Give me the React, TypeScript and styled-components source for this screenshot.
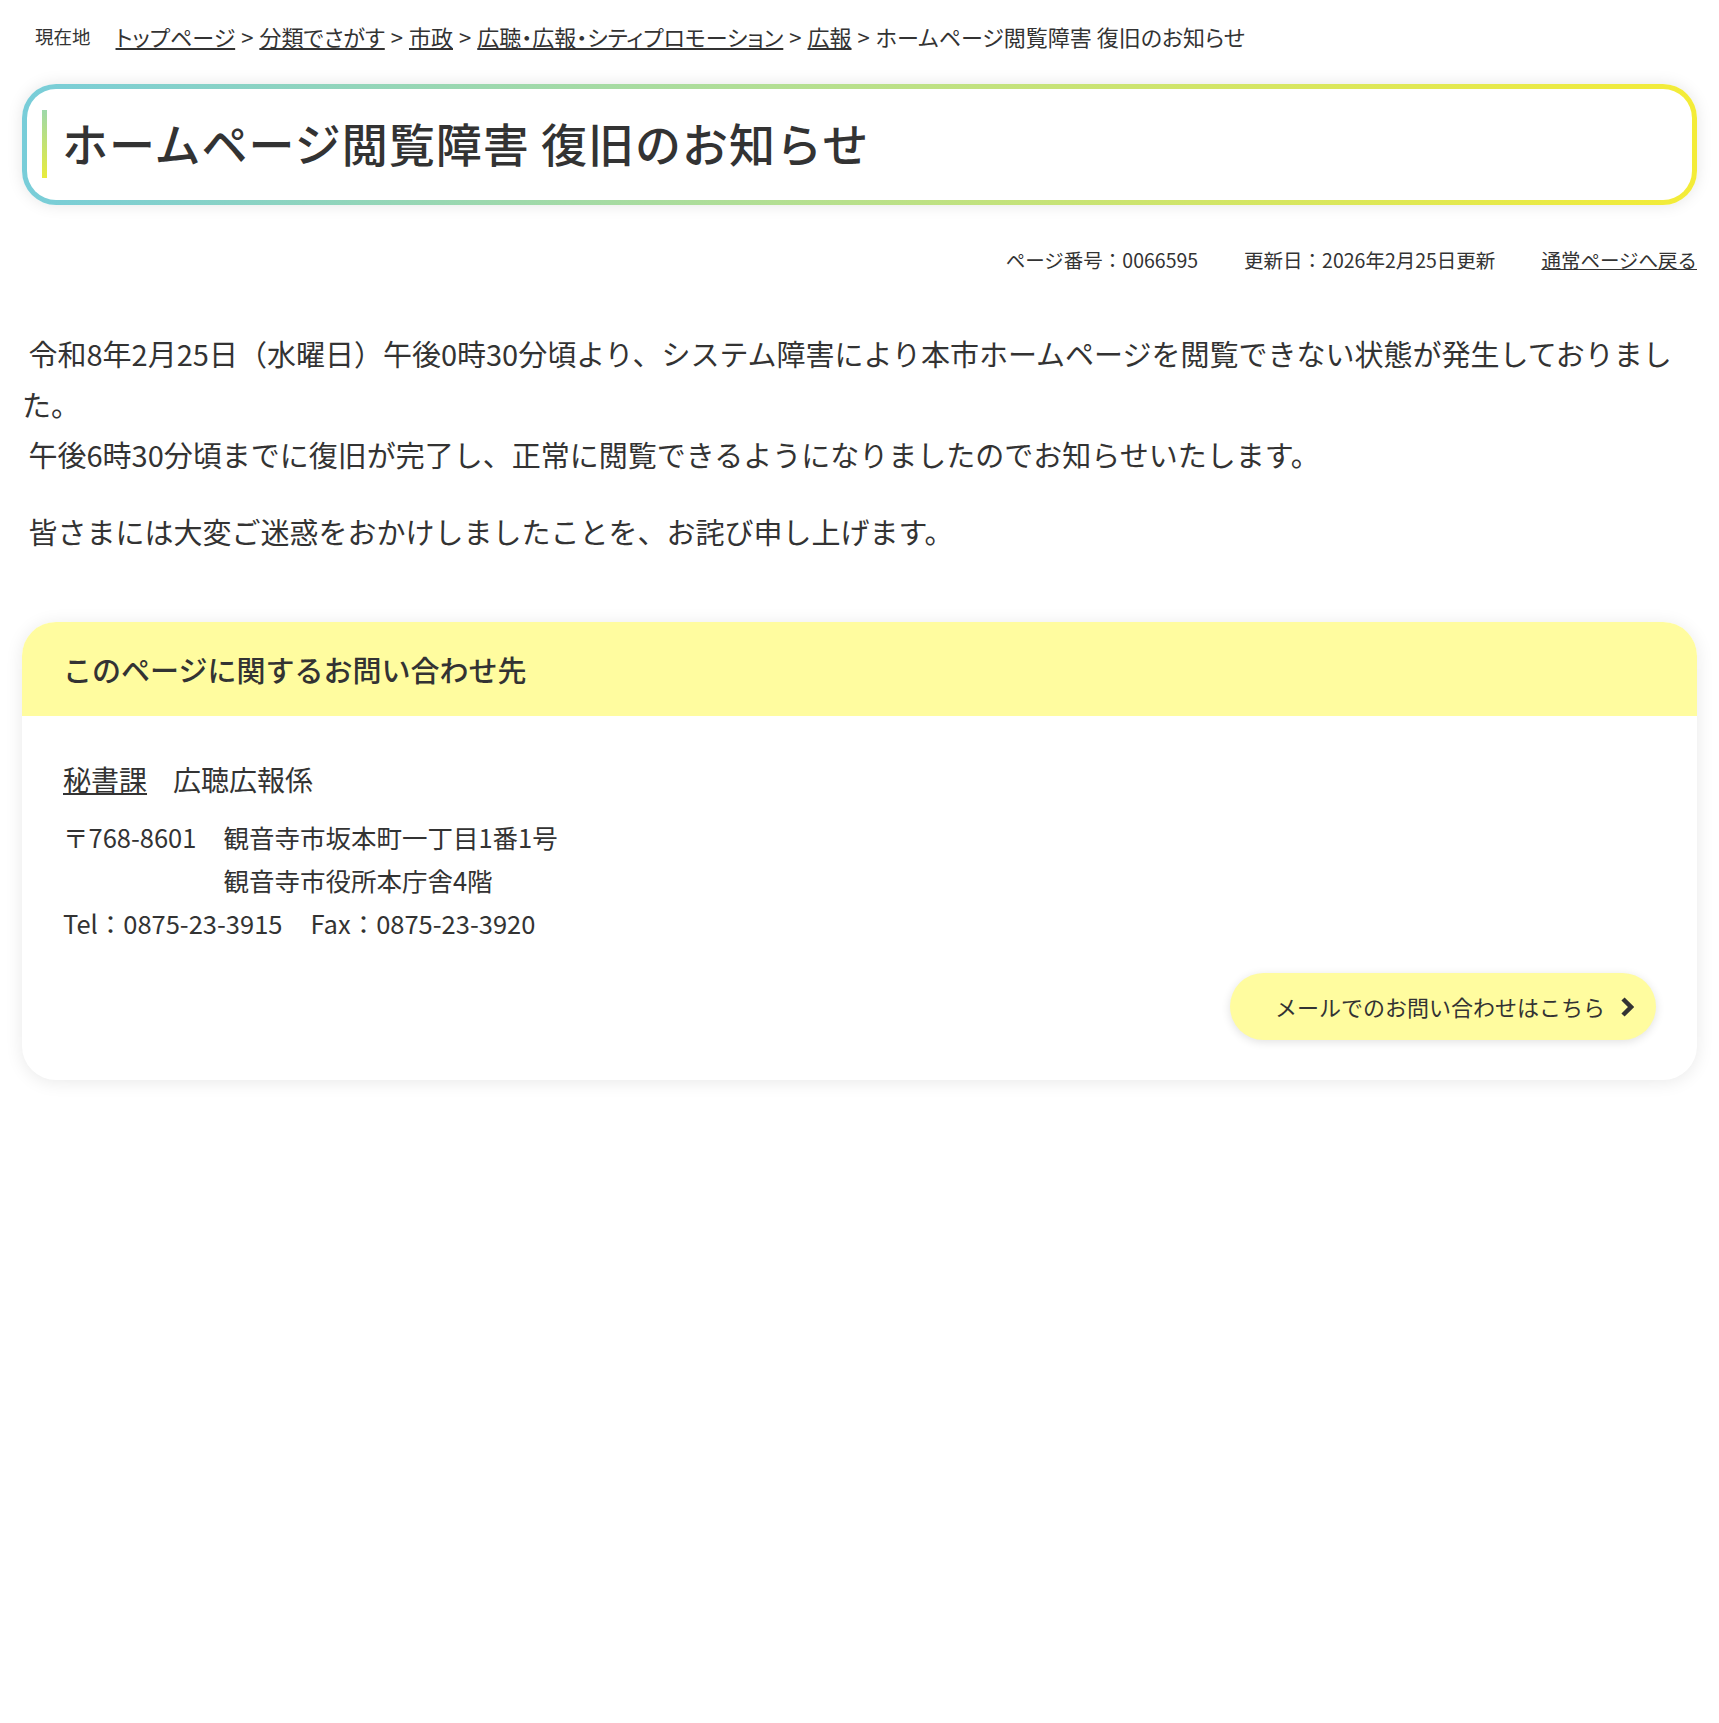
import React from "react";
import styled, { createGlobalStyle } from "styled-components";

const GlobalStyle = createGlobalStyle`
  body {
    margin: 0;
    background: #fff;
    color: #333;
    font-family: "Noto Sans CJK JP", "Liberation Sans", sans-serif;
  }

  a {
    color: #333;
  }
`;

const Page = styled.div`
  padding: 0 22px 80px;
`;

const Breadcrumb = styled.nav`
  display: flex;
  align-items: center;
  padding: 20px 0 0 13px;
  font-size: 22px;
  line-height: 32px;
  white-space: nowrap;
  font-feature-settings: "palt";
`;

const Here = styled.span`
  font-size: 18.5px;
  margin-right: 25px;
`;

const Sep = styled.span`
  margin: 0 6px;
`;

const TitleFrame = styled.div`
  margin-top: 32px;
  padding: 5px;
  border-radius: 34px;
  background: linear-gradient(90deg, #78cdd9 0%, #b3df93 45%, #f4ec37 100%);
  box-shadow: 0 0 16px rgba(0, 0, 0, 0.1);
`;

const TitleInner = styled.div`
  background: #fff;
  border-radius: 29px;
  padding: 21px 15px 22px;
`;

const H1 = styled.h1`
  margin: 0;
  padding-left: 15px;
  border-left: 5px solid;
  border-image: linear-gradient(180deg, #9cd8ac, #eaec3a) 1;
  font-size: 46px;
  line-height: 64px;
  padding-bottom: 4px;
  font-weight: 500;
  letter-spacing: 1px;
  color: #333;
`;

const Meta = styled.div`
  display: flex;
  justify-content: flex-end;
  gap: 46px;
  margin-top: 40px;
  font-size: 19.5px;
  line-height: 30px;
`;

const Body = styled.div`
  margin-top: 53px;
  font-size: 29px;
  line-height: 50.5px;

  p {
    margin: 0 0 26px;
  }
`;

const ContactBox = styled.section`
  margin-top: 66px;
  border-radius: 34px;
  background: #fff;
  box-shadow: 0 2px 18px rgba(0, 0, 0, 0.09);
  overflow: hidden;
`;

const ContactHead = styled.h2`
  margin: 0;
  height: 94px;
  display: flex;
  align-items: center;
  padding: 0 41px;
  background: #fffc9f;
  font-size: 29px;
  font-weight: 500;
  color: #333;
`;

const ContactBody = styled.div`
  padding: 42px 41px 40px;
  font-size: 25.5px;
  line-height: 43px;
`;

const Division = styled.div`
  font-size: 28px;
  line-height: 42px;
  margin-bottom: 15px;

  a {
    margin-right: 26px;
  }
`;

const AddressRow = styled.div`
  display: flex;
  gap: 27px;
`;

const TelRow = styled.div`
  display: flex;
  gap: 28px;
`;

const ButtonRow = styled.div`
  display: flex;
  justify-content: flex-end;
  margin-top: 29px;
`;

const MailButton = styled.a`
  display: inline-flex;
  align-items: center;
  gap: 15px;
  height: 67px;
  padding: 0 22px 0 45px;
  border-radius: 34px;
  background: #fffc9f;
  box-shadow: 0 2px 10px rgba(0, 0, 0, 0.12);
  font-size: 22px;
  color: #333;
  text-decoration: none;
`;

const crumbs = [
  "トップページ",
  "分類でさがす",
  "市政",
  "広聴・広報・シティプロモーション",
  "広報",
];

export default function App() {
  return (
    <>
      <GlobalStyle />
      <Page>
        <Breadcrumb>
          <Here>現在地</Here>
          {crumbs.map((c) => (
            <React.Fragment key={c}>
              <a href="#">{c}</a>
              <Sep>&gt;</Sep>
            </React.Fragment>
          ))}
          <span>ホームページ閲覧障害 復旧のお知らせ</span>
        </Breadcrumb>

        <TitleFrame>
          <TitleInner>
            <H1>ホームページ閲覧障害 復旧のお知らせ</H1>
          </TitleInner>
        </TitleFrame>

        <Meta>
          <span>ページ番号：0066595</span>
          <span>更新日：2026年2月25日更新</span>
          <a href="#">通常ページへ戻る</a>
        </Meta>

        <Body>
          <p>
            {"\u00a0"}令和8年2月25日（水曜日）午後0時30分頃より、システム障害により本市ホームページを閲覧できない状態が発生しておりました。
            <br />
            {"\u00a0"}午後6時30分頃までに復旧が完了し、正常に閲覧できるようになりましたのでお知らせいたします。
          </p>
          <p>{"\u00a0"}皆さまには大変ご迷惑をおかけしましたことを、お詫び申し上げます。</p>
        </Body>

        <ContactBox>
          <ContactHead>このページに関するお問い合わせ先</ContactHead>
          <ContactBody>
            <Division>
              <a href="#">秘書課</a>
              <span>広聴広報係</span>
            </Division>
            <AddressRow>
              <span>〒768-8601</span>
              <div>
                観音寺市坂本町一丁目1番1号
                <br />
                観音寺市役所本庁舎4階
              </div>
            </AddressRow>
            <TelRow>
              <span>Tel：0875-23-3915</span>
              <span>Fax：0875-23-3920</span>
            </TelRow>
            <ButtonRow>
              <MailButton href="#">
                メールでのお問い合わせはこちら
                <svg width="14" height="22" viewBox="0 0 14 22">
                  <path
                    d="M3 3 L11 11 L3 19"
                    fill="none"
                    stroke="#333"
                    strokeWidth="4.5"
                    strokeLinejoin="miter"
                  />
                </svg>
              </MailButton>
            </ButtonRow>
          </ContactBody>
        </ContactBox>
      </Page>
    </>
  );
}
